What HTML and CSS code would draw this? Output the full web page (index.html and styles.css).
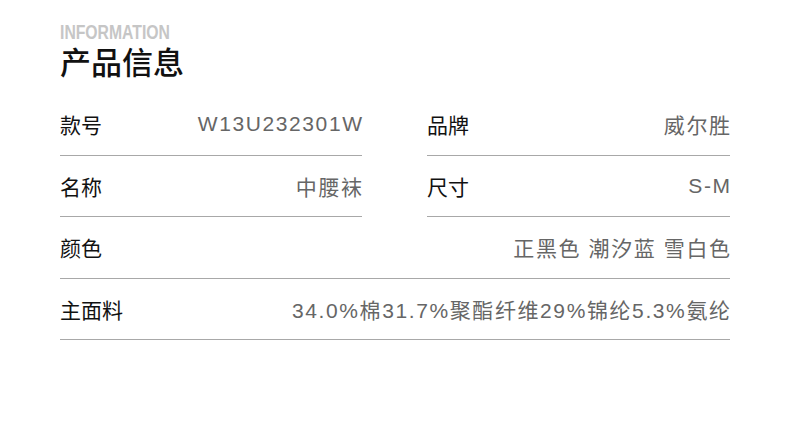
FILE: index.html
```html
<!DOCTYPE html>
<html lang="zh-CN">
<head>
    <meta charset="UTF-8">
    <title>产品信息</title>
    <link rel="stylesheet" href="styles.css">
</head>
<body>
<section class="info">
    <header class="info-head">
        <div class="info-en">INFORMATION</div>
        <h1>产品信息</h1>
    </header>
    <div class="info-grid">
        <div class="row"><span class="label">款号</span><span class="value">W13U232301W</span></div>
        <div class="row"><span class="label">品牌</span><span class="value">威尔胜</span></div>
        <div class="row"><span class="label">名称</span><span class="value">中腰袜</span></div>
        <div class="row"><span class="label">尺寸</span><span class="value">S-M</span></div>
        <div class="row wide"><span class="label">颜色</span><span class="value">正黑色 潮汐蓝 雪白色</span></div>
        <div class="row wide"><span class="label">主面料</span><span class="value">34.0%棉31.7%聚酯纤维29%锦纶5.3%氨纶</span></div>
    </div>
</section>
</body>
</html>
```

FILE: styles.css
```css
body {
    margin: 0;
    background-color: #fff;
    font-family: 'Noto Sans CJK SC', sans-serif;
}

.info {
    width: 670px;
    margin-left: 60px;
    padding-top: 23px;
}

.info-head {
    height: 71px;
}

.info-en {
    font-family: 'Liberation Sans', sans-serif;
    font-weight: bold;
    font-size: 21px;
    line-height: 18px;
    height: 18px;
    margin-bottom: 2px;
    color: #c6c6c6;
    transform: scaleX(0.75);
    transform-origin: left center;
    white-space: nowrap;
}

h1 {
    margin: 0;
    font-size: 31px;
    font-weight: 500;
    line-height: 36px;
    color: #111;
}

.info-grid {
    display: grid;
    grid-template-columns: 302px 303px;
    column-gap: 65px;
}

.row {
    display: flex;
    justify-content: space-between;
    align-items: center;
    height: 60.5px;
    border-bottom: 1px solid #a8a8a8;
    font-size: 21px;
}

.row.wide {
    grid-column: 1 / 3;
}

.label {
    color: #111;
}

.value {
    font-family: 'Liberation Sans', 'Noto Sans CJK SC', sans-serif;
    color: #666;
    letter-spacing: 1.6px;
    margin-right: -1.6px;
}
```
